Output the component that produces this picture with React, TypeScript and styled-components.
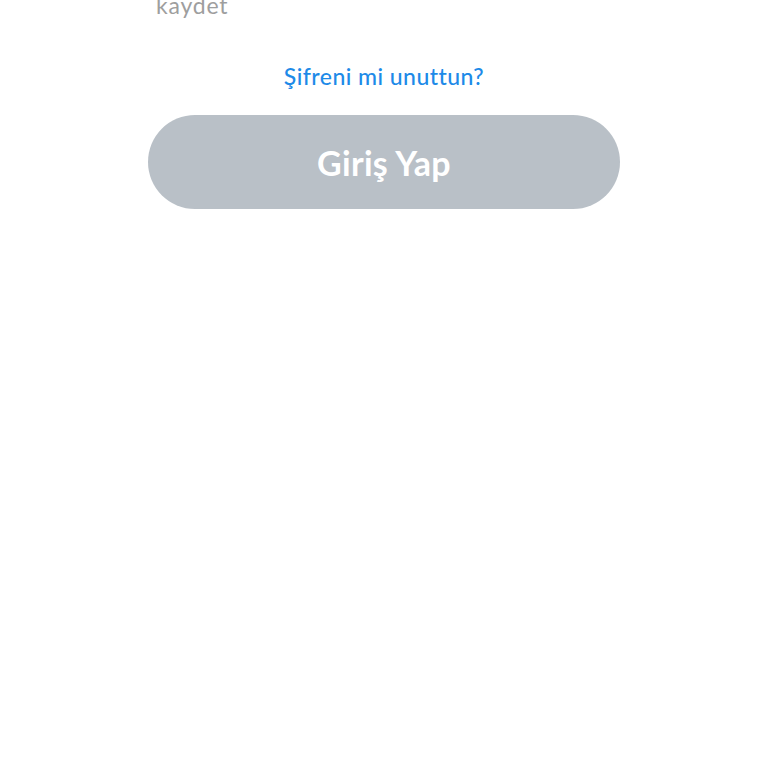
import React from "react";
import styled, { createGlobalStyle } from "styled-components";

const Global = createGlobalStyle`
  html, body { margin: 0; padding: 0; background: #ffffff; }
  body { font-family: "Lato", "Noto Sans", sans-serif; }
`;

const Page = styled.div`
  width: 768px;
  height: 768px;
  overflow: hidden;
  display: flex;
  flex-direction: column;
  align-items: center;
`;

const Form = styled.div`
  width: 472px;
  display: flex;
  flex-direction: column;
  align-items: stretch;
  margin-top: -9px;
`;

const SaveLabel = styled.div`
  padding-left: 8px;
  font-size: 23px;
  line-height: 28px;
  font-weight: 400;
  color: #9e9e9e;
  letter-spacing: 0.8px;
`;

const ForgotLink = styled.a`
  align-self: center;
  margin-top: 42px;
  font-size: 23px;
  line-height: 30px;
  font-weight: 500;
  color: #1d8ae8;
  text-decoration: none;
  letter-spacing: 0.45px;
`;

const LoginButton = styled.button`
  margin-top: 24px;
  height: 94px;
  border: none;
  border-radius: 47px;
  background: #b9c0c7;
  color: #ffffff;
  font-family: "Lato", "Noto Sans", sans-serif;
  font-size: 34px;
  font-weight: 700;
  letter-spacing: 0.3px;
  cursor: default;
`;

export default function App() {
  return (
    <Page>
      <Global />
      <Form>
        <SaveLabel>kaydet</SaveLabel>
        <ForgotLink href="#">Şifreni mi unuttun?</ForgotLink>
        <LoginButton type="button">Giriş Yap</LoginButton>
      </Form>
    </Page>
  );
}
